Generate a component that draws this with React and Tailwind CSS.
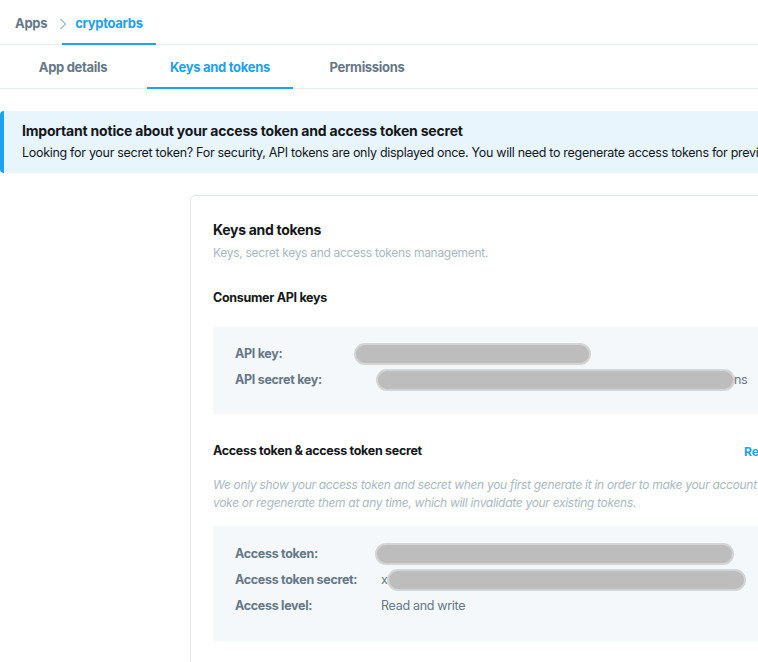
import React from "react";

const Blur = ({ className }) => (
    <div className={`h-[18px] rounded-full bg-[#bdbdbd] shadow-[0_0_0_2px_#d4d4d4] ${className}`}></div>
);

const Row = ({ label, children }) => (
    <div className="flex items-center h-[26px]">
        <div className="w-[146px] shrink-0 text-[12.5px] font-bold tracking-[-0.3px] text-[#657786]">{label}</div>
        <div className="flex items-center text-[12.5px] tracking-[-0.3px] text-[#657786]">{children}</div>
    </div>
);

export default function App() {
    return (
        <main
            className="w-[758px] h-[662px] overflow-hidden bg-white text-[#14171a]"
            style={{ fontFamily: "Inter, 'Liberation Sans', sans-serif" }}
        >
            {/* BREADCRUMB */}
            <header className="flex items-end h-[45px] border-b border-[#e6ecf0] pl-[15px]">
                <div className="flex items-center h-[44px] pt-[3px] text-[13px] tracking-[-0.3px] font-bold text-[#657786]">Apps</div>
                <div className="flex items-center h-[44px] pt-[3px] pl-[12px]">
                    <svg width="8" height="12" viewBox="0 0 8 12" fill="none">
                        <path d="M1.5 1l5 5-5 5" stroke="#aab8c2" strokeWidth="1.3" />
                    </svg>
                </div>
                <div className="flex items-center h-[44px] pt-[3px] ml-[-5px] px-[13px] text-[13px] tracking-[-0.3px] font-bold text-[#1da1f2] border-b-2 border-[#1da1f2] mb-[-1px]">
                    cryptoarbs
                </div>
            </header>

            {/* TABS */}
            <nav className="flex h-[44px] border-b border-[#e6ecf0] pl-[15px]">
                <div className="w-[116px] pt-[3px] flex items-center justify-center text-[13px] tracking-[-0.3px] font-bold text-[#657786]">App details</div>
                <div className="w-[146px] pt-[3px] ml-[16px] flex items-center justify-center text-[13px] tracking-[-0.3px] font-bold text-[#1da1f2] border-b-2 border-[#1da1f2] mb-[-1px]">
                    Keys and tokens
                </div>
                <div className="w-[124px] pt-[3px] ml-[12px] flex items-center justify-center text-[13px] tracking-[-0.3px] font-bold text-[#657786]">Permissions</div>
            </nav>

            {/* NOTICE */}
            <div className="mt-[22px] h-[62px] bg-[#e8f5fd] border-l-4 border-[#1da1f2] rounded-l-[4px] pl-[18px] pt-[11px] whitespace-nowrap overflow-hidden">
                <div className="text-[14px] font-bold leading-[18px] tracking-[-0.2px]">
                    Important notice about your access token and access token secret
                </div>
                <div className="mt-[5px] text-[12.5px] leading-[16px] tracking-[-0.3px]">
                    Looking for your secret token? For security, API tokens are only displayed once. You will need to regenerate access tokens for previously generated tokens.
                </div>
            </div>

            {/* CARD */}
            <div className="flex mt-[22px]">
                <div className="w-[190px] shrink-0"></div>
                <section className="w-[640px] shrink-0 border border-[#e1e8ed] rounded-[5px] pl-[22px] pt-[24px] pb-10">
                    <h1 className="text-[14px] font-bold leading-[20px] tracking-[-0.3px]">Keys and tokens</h1>
                    <p className="mt-[5px] text-[12px] text-[#aab8c2] leading-[16px] tracking-[-0.3px]">
                        Keys, secret keys and access tokens management.
                    </p>

                    <h2 className="mt-[29px] text-[12.5px] font-bold leading-[16px] tracking-[-0.3px]">Consumer API keys</h2>
                    <div className="mt-[21px] h-[87px] bg-[#f5f8fa] pl-[22px] pt-[14px]">
                        <Row label="API key:">
                            <Blur className="ml-[-25px] w-[233px] h-[14px]" />
                        </Row>
                        <Row label="API secret key:">
                            <Blur className="ml-[-3px] w-[355px]" />
                            <span className="ml-[1px]">ns</span>
                        </Row>
                    </div>

                    <div className="mt-[29px] flex whitespace-nowrap overflow-hidden w-[545px]">
                        <h2 className="w-[531px] shrink-0 text-[12.5px] font-bold leading-[16px] tracking-[-0.3px]">
                            Access token &amp; access token secret
                        </h2>
                        <span className="text-[12px] text-[#1da1f2] font-bold">Regenerate</span>
                    </div>
                    <p className="mt-[15px] text-[12px] italic text-[#aab8c2] leading-[18px] tracking-[-0.3px] whitespace-nowrap w-[545px] overflow-hidden">
                        We only show your access token and secret when you first generate it in order to make your account secure. You can re
                        <br />
                        voke or regenerate them at any time, which will invalidate your existing tokens.
                    </p>

                    <div className="mt-[14px] h-[115px] bg-[#f5f8fa] pl-[22px] pt-[15px]">
                        <Row label="Access token:">
                            <Blur className="ml-[-4px] w-[355px]" />
                        </Row>
                        <Row label="Access token secret:">
                            <span>x</span>
                            <Blur className="ml-[1px] w-[355px]" />
                        </Row>
                        <Row label="Access level:">
                            <span>Read and write</span>
                        </Row>
                    </div>
                </section>
            </div>
        </main>
    );
}
